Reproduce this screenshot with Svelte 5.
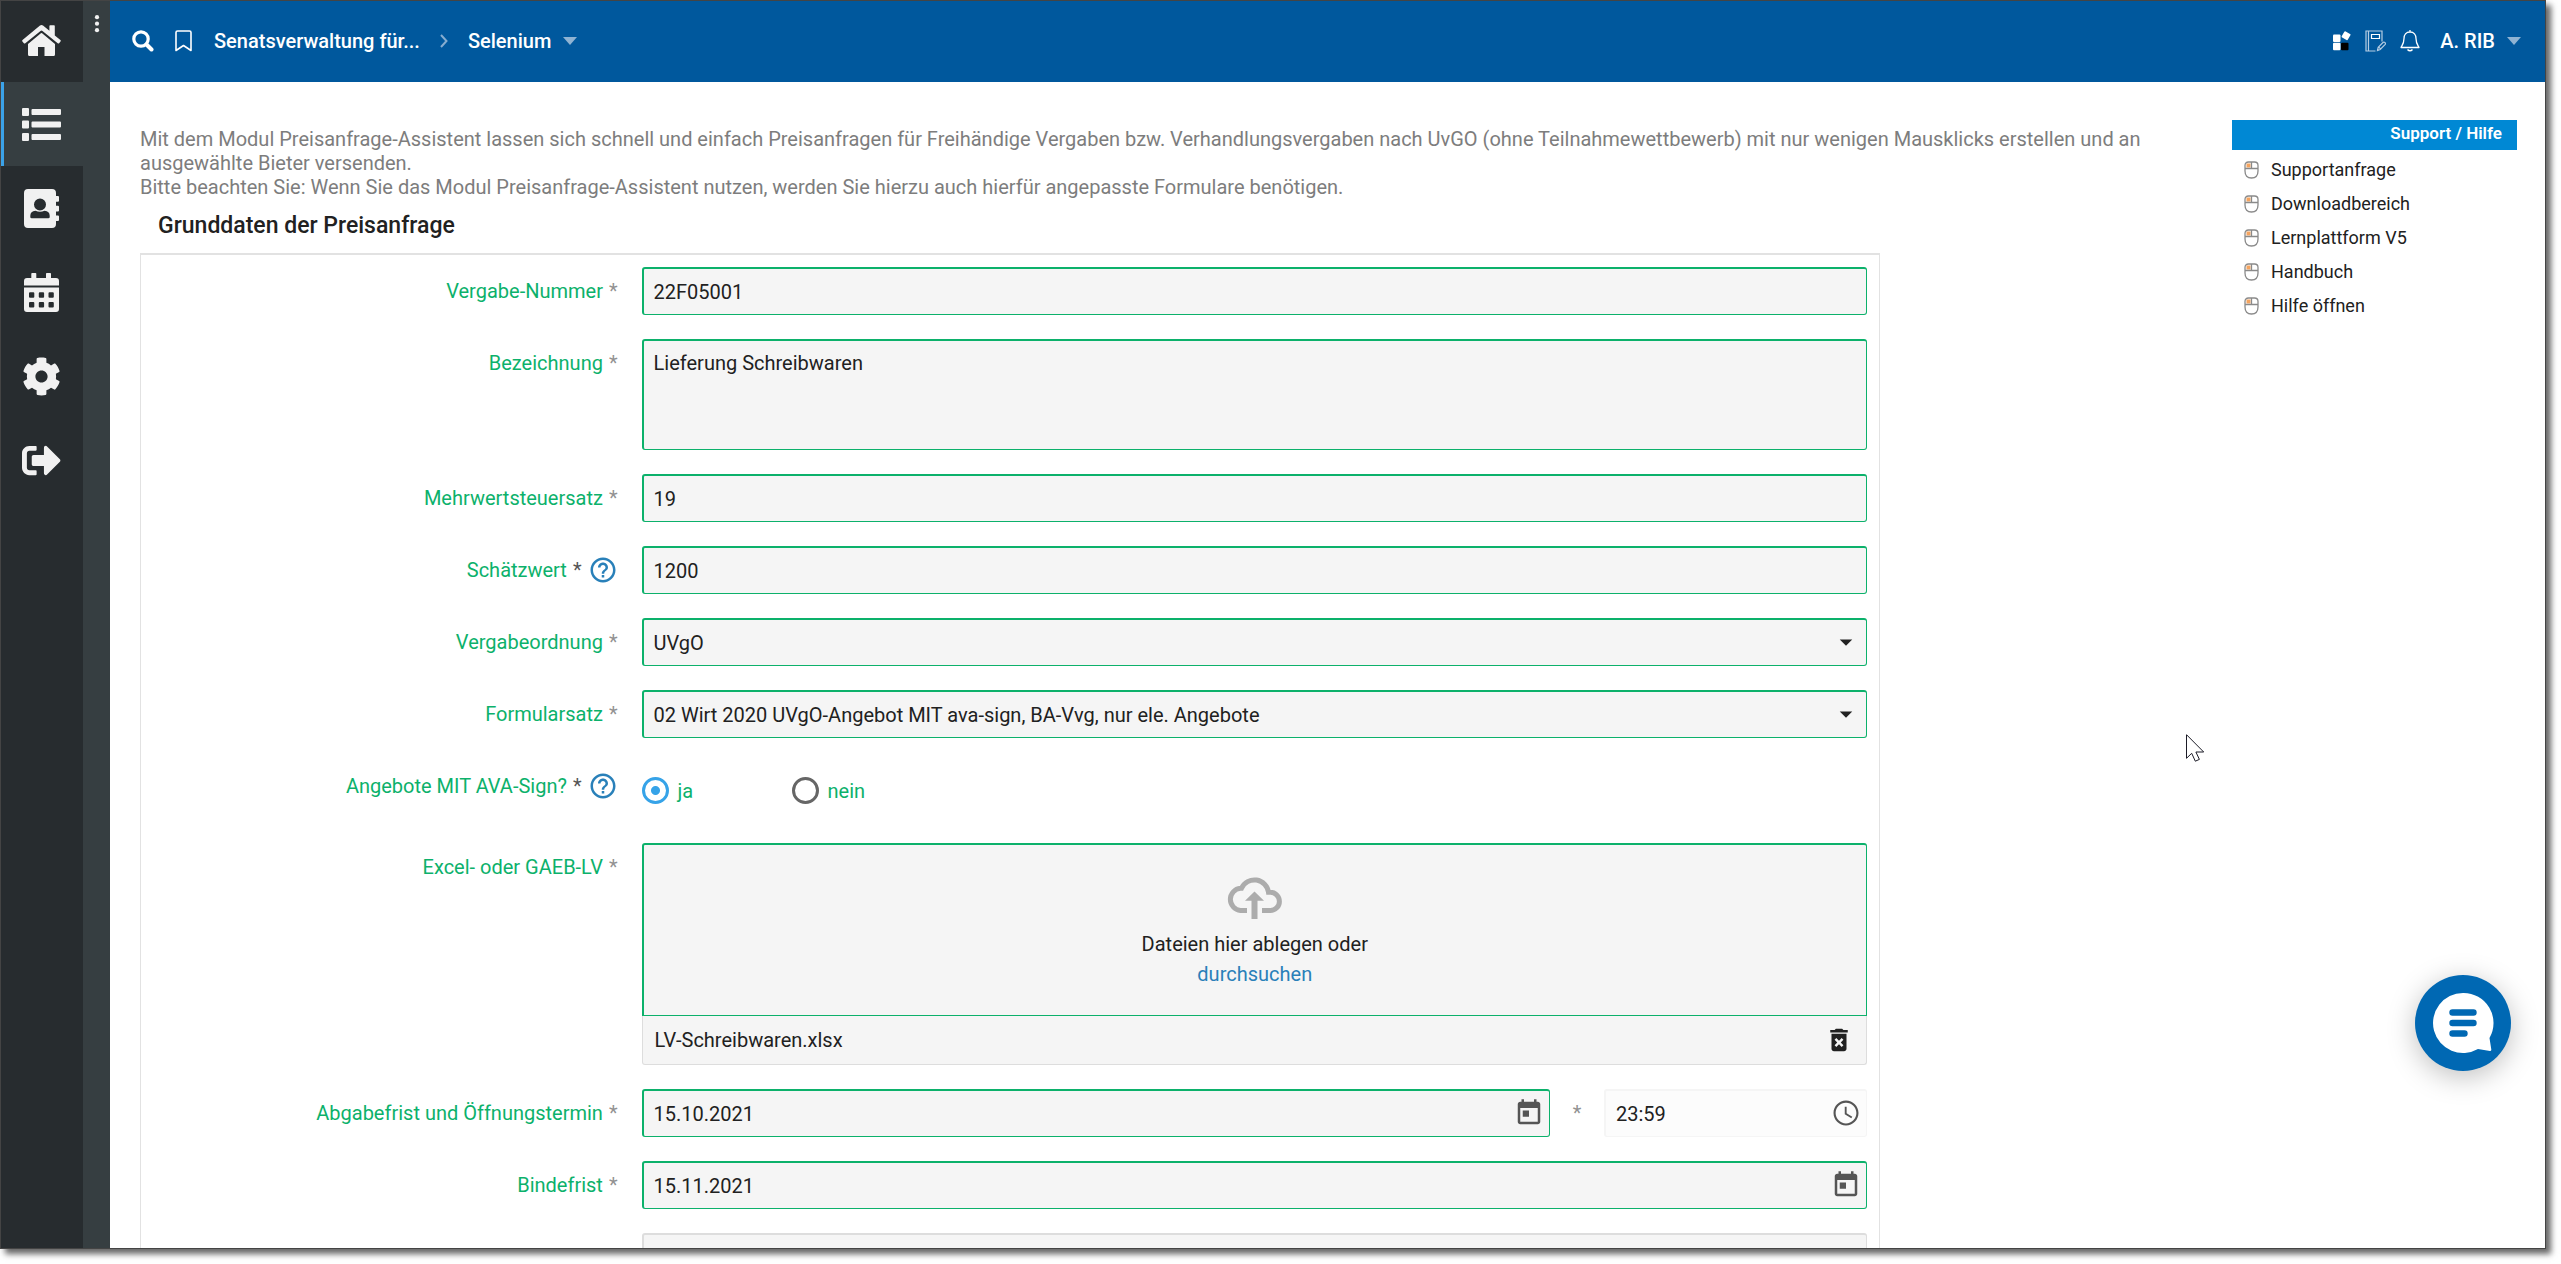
<script lang="ts">
  interface NavItem {
    label: string
    width: number
    height: number
    viewBox: string
    path: string
  }

  const navItems: NavItem[] = [
    {
      label: 'Startseite',
      width: 39,
      height: 31,
      viewBox: '0 0 39 31',
      path: 'M18 .6q1.5-1.2 3 0l6.4 5.2V1q0-.8.8-.8h3.800q.8 0 .8.800v9.400l5.600 4.600q.8.7.1 1.500l-1.400 1.700q-.7.700-1.400.100L20.500 6q-1-.8-2 0L3.300 18.300q-.7.600-1.400-.1L.4 16.500q-.6-.8.1-1.500zM18.900 8.300q.6-.5 1.200 0L33 18.900V29.500q0 1.500-1.500 1.500h-9V22h-6.500v9H7.500Q6 31 6 29.500V18.900z',
    },
    {
      label: 'Vergaben',
      width: 39,
      height: 33,
      viewBox: '0 0 39 33',
      path: 'M1 0h5q1 0 1 1v6q0 1-1 1H1Q0 8 0 7V1q0-1 1-1zM10.500 1H38q1 0 1 1v4q0 1-1 1H10.500q-1 0-1-1V2q0-1 1-1zM1 12.500h5q1 0 1 1v6q0 1-1 1H1q-1 0-1-1v-6q0-1 1-1zM10.500 13.500H38q1 0 1 1v4q0 1-1 1H10.500q-1 0-1-1v-4q0-1 1-1zM1 25h5q1 0 1 1v6q0 1-1 1H1q-1 0-1-1v-6q0-1 1-1zM10.500 26H38q1 0 1 1v4q0 1-1 1H10.500q-1 0-1-1v-4q0-1 1-1z',
    },
    {
      label: 'Adressbuch',
      width: 35,
      height: 39,
      viewBox: '0 0 35 39',
      path: 'M4 0h24q4 0 4 4v3h2q1 0 1 1v3.700q0 1-1 1h-2v4h2q1 0 1 1v3.700q0 1-1 1h-2v4h2q1 0 1 1V31q0 1-1 1h-2v3q0 4-4 4H4q-4 0-4-4V4q0-4 4-4zM16 9.500a6 6 0 1 0 0 12a6 6 0 1 0 0-12zM11.500 21.700q-5.200.6-5.200 5v1.300q0 1.300 1.300 1.300h16.800q1.300 0 1.300-1.300v-1.300q0-4.400-5.200-5q-4.500 2-9 0z',
    },
    {
      label: 'Kalender',
      width: 35,
      height: 39,
      viewBox: '0 0 35 39',
      path: 'M3 5h4.300V.8q0-.8.8-.8h3.400q.8 0 .8.800V5H22V.8q0-.8.8-.8h3.400q.8 0 .8.800V5h5q3 0 3 3v4.500H0V8q0-3 3-3zM0 14.500h35V36q0 3-3 3H3q-3 0-3-3zM6 19.300q-1 0-1 1v3.400q0 1 1 1h3.300q1 0 1-1v-3.400q0-1-1-1zm9.800 0q-1 0-1 1v3.400q0 1 1 1h3.300q1 0 1-1v-3.400q0-1-1-1zm9.700 0q-1 0-1 1v3.400q0 1 1 1h3.300q1 0 1-1v-3.400q0-1-1-1zM6 29q-1 0-1 1v3.400q0 1 1 1h3.300q1 0 1-1V30q0-1-1-1zm9.800 0q-1 0-1 1v3.400q0 1 1 1h3.300q1 0 1-1V30q0-1-1-1zm9.700 0q-1 0-1 1v3.400q0 1 1 1h3.300q1 0 1-1V30q0-1-1-1z',
    },
    {
      label: 'Einstellungen',
      width: 39,
      height: 39,
      viewBox: '0 0 512 512',
      path: 'M487.4 315.7l-42.6-24.6c4.3-23.2 4.3-47 0-70.2l42.6-24.6c4.900-2.800 7.100-8.600 5.500-14-11.100-35.600-30-67.800-54.700-94.600-3.800-4.100-10-5.100-14.800-2.300L380.800 110c-17.900-15.400-38.500-27.300-60.800-35.100V25.800c0-5.600-3.900-10.500-9.400-11.700-36.700-8.200-74.300-7.800-109.200 0-5.500 1.200-9.400 6.100-9.400 11.700V75c-22.200 7.900-42.800 19.800-60.800 35.100L88.700 85.500c-4.900-2.800-11-1.900-14.800 2.300-24.700 26.700-43.600 58.900-54.700 94.600-1.700 5.400.6 11.200 5.500 14L67.300 221c-4.300 23.200-4.300 47 0 70.200l-42.600 24.600c-4.900 2.800-7.100 8.600-5.500 14 11.100 35.600 30 67.800 54.700 94.600 3.800 4.100 10 5.100 14.800 2.300l42.600-24.600c17.900 15.400 38.500 27.300 60.800 35.100v49.200c0 5.600 3.900 10.500 9.400 11.700 36.700 8.200 74.300 7.800 109.200 0 5.500-1.200 9.400-6.100 9.400-11.700v-49.200c22.200-7.900 42.800-19.800 60.800-35.100l42.600 24.600c4.900 2.800 11 1.900 14.800-2.300 24.700-26.700 43.600-58.900 54.700-94.600 1.500-5.500-.7-11.300-5.600-14.100zM256 336c-44.100 0-80-35.900-80-80s35.900-80 80-80 80 35.900 80 80-35.900 80-80 80z',
    },
    {
      label: 'Abmelden',
      width: 39,
      height: 39,
      viewBox: '0 0 512 512',
      path: 'M497 273L329 441c-15 15-41 4.500-41-17v-96H152c-13.300 0-24-10.700-24-24v-96c0-13.300 10.700-24 24-24h136V88c0-21.400 25.900-32 41-17l168 168c9.300 9.400 9.300 24.600 0 34zM192 436v-40c0-6.600-5.400-12-12-12H96c-17.700 0-32-14.300-32-32V160c0-17.700 14.300-32 32-32h84c6.600 0 12-5.400 12-12V76c0-6.600-5.400-12-12-12H96c-53 0-96 43-96 96v192c0 53 43 96 96 96h84c6.600 0 12-5.400 12-12z',
    },
  ]

  const supportLinks = ['Supportanfrage', 'Downloadbereich', 'Lernplattform V5', 'Handbuch', 'Hilfe öffnen']

  let active = $state('Vergaben')
  let nummer = $state('22F05001')
  let bezeichnung = $state('Lieferung Schreibwaren')
  let steuersatz = $state('19')
  let schaetzwert = $state('1200')
  let avaSign = $state('ja')
  let files = $state(['LV-Schreibwaren.xlsx'])
  let abgabefrist = $state('15.10.2021')
  let uhrzeit = $state('23:59')
  let bindefrist = $state('15.11.2021')

  function removeFile(name: string) {
    files = files.filter((f) => f !== name)
  }
</script>

{#snippet caret()}
  <svg class="caret" width="14" height="8" viewBox="0 0 14 8" aria-hidden="true"><path d="M0 0h14L7 8z" /></svg>
{/snippet}

{#snippet dropIcon()}
  <svg class="field-icon dark" viewBox="0 0 24 24" aria-hidden="true"><path d="M7 10l5 5 5-5z" /></svg>
{/snippet}

{#snippet calendarIcon()}
  <svg class="field-icon" viewBox="0 0 24 24" aria-hidden="true">
    <path d="M19 3h-1V1h-2v2H8V1H6v2H5c-1.110 0-1.990.9-1.990 2L3 19c0 1.100.89 2 2 2h14c1.100 0 2-.9 2-2V5c0-1.100-.9-2-2-2zm0 16H5V8h14v11zM7 10h5v5H7z" />
  </svg>
{/snippet}

{#snippet helpButton()}
  <button class="help" type="button" aria-label="Hilfe anzeigen">
    <svg viewBox="0 0 24 24" aria-hidden="true">
      <path d="M11 18h2v-2h-2v2zm1-16C6.480 2 2 6.480 2 12s4.480 10 10 10 10-4.480 10-10S17.520 2 12 2zm0 18c-4.410 0-8-3.590-8-8s3.590-8 8-8 8 3.590 8 8-3.590 8-8 8zm0-14c-2.210 0-4 1.790-4 4h2c0-1.100.9-2 2-2s2 .9 2 2c0 2-3 1.750-3 5h2c0-2.250 3-2.500 3-5 0-2.210-1.790-4-4-4z" />
    </svg>
  </button>
{/snippet}

<div class="window">
  <nav class="sidebar" aria-label="Hauptnavigation">
    {#each navItems as item}
      <button
        class="nav-item"
        class:nav-item--active={active === item.label}
        type="button"
        aria-label={item.label}
        onclick={() => (active = item.label)}
      >
        <svg width={item.width} height={item.height} viewBox={item.viewBox} aria-hidden="true">
          <path fill-rule="evenodd" d={item.path} />
        </svg>
      </button>
    {/each}
  </nav>

  <div class="strip">
    <button class="more" type="button" aria-label="Menü ausklappen">
      <svg width="6" height="18" viewBox="0 0 6 18" aria-hidden="true">
        <circle cx="3" cy="2.200" r="2.100" /><circle cx="3" cy="8.700" r="2.100" /><circle cx="3" cy="15.200" r="2.100" />
      </svg>
    </button>
  </div>

  <div class="page">
    <header class="topbar">
      <button class="icon-btn" type="button" aria-label="Suche">
        <svg width="22" height="22" viewBox="0 0 22 22" fill="none" stroke="#fff" aria-hidden="true">
          <circle cx="9" cy="9" r="7.200" stroke-width="3.200" />
          <path d="M14.500 14.500l5 5" stroke-width="4" stroke-linecap="round" />
        </svg>
      </button>
      <button class="icon-btn bookmark" type="button" aria-label="Merken">
        <svg width="17" height="22" viewBox="0 0 17 22" fill="none" stroke="#fff" stroke-width="1.600" stroke-linejoin="round" aria-hidden="true">
          <path d="M1 2.500Q1 1 2.500 1h12Q16 1 16 2.500V20.500l-7.500-5-7.500 5z" />
        </svg>
      </button>
      <a class="crumb" href="#senat">Senatsverwaltung für...</a>
      <svg class="chevron" width="8" height="14" viewBox="0 0 8 14" fill="none" aria-hidden="true"><path d="M1 1l5.500 6L1 13" /></svg>
      <button class="crumb" type="button">Selenium {@render caret()}</button>

      <div class="tools">
        <button class="icon-btn" type="button" aria-label="Anwendungen">
          <svg width="18" height="20" viewBox="0 0 18 20" fill="#fff" aria-hidden="true">
            <rect x="0" y="3.500" width="7.500" height="7.500" rx="1" />
            <rect x="0" y="11.800" width="7.500" height="7.500" rx="1" />
            <rect x="8" y="11.800" width="7.500" height="7.500" rx="1" fill="#000" />
            <rect x="9.600" y="1.200" width="7" height="7" rx="1" transform="rotate(30 13.100 4.700)" />
          </svg>
        </button>
        <button class="icon-btn" type="button" aria-label="Notizen">
          <svg width="21" height="22" viewBox="0 0 21 22" fill="none" stroke="#b5cde3" stroke-width="1.200" aria-hidden="true">
            <path d="M17 11.500V1H1v20h9.500M3.500 1v20" />
            <path d="M6.500 4.500h8v4h-8z" stroke="#fff" />
            <path d="M12.500 20.500l.7-3.200 5-5q.8-.6 1.500.1l.5.500q.6.700 0 1.400l-5 5.200zM13.800 17.200l2 2" />
          </svg>
        </button>
        <button class="icon-btn" type="button" aria-label="Benachrichtigungen">
          <svg width="20" height="22" viewBox="0 0 20 22" fill="none" stroke="#fff" stroke-width="1.300" stroke-linejoin="round" aria-hidden="true">
            <path d="M10 2c-4 0-6 3-6 6.500 0 5-1.500 6.500-3 9h18c-1.500-2.500-3-4-3-9C16 5 14 2 10 2zM10 2V0" />
            <path d="M7.500 19.500q2.500 2.500 5 0" stroke-width="1.600" />
          </svg>
        </button>
        <button class="crumb user" type="button">A. RIB {@render caret()}</button>
      </div>
    </header>

    <div class="content">
      <main class="main">
        <p class="intro">
          Mit dem Modul Preisanfrage-Assistent lassen sich schnell und einfach Preisanfragen für Freihändige Vergaben
          bzw. Verhandlungsvergaben nach UvGO (ohne Teilnahmewettbewerb) mit nur wenigen Mausklicks erstellen und an
          ausgewählte Bieter versenden.<br />
          Bitte beachten Sie: Wenn Sie das Modul Preisanfrage-Assistent nutzen, werden Sie hierzu auch hierfür
          angepasste Formulare benötigen.
        </p>
        <h1>Grunddaten der Preisanfrage</h1>

        <form class="form" onsubmit={(e) => e.preventDefault()}>
          <div class="label"><label for="nummer">Vergabe-Nummer</label><span class="star">*</span></div>
          <input class="control" id="nummer" type="text" bind:value={nummer} />

          <div class="label"><label for="bezeichnung">Bezeichnung</label><span class="star">*</span></div>
          <textarea class="control area" id="bezeichnung" bind:value={bezeichnung}></textarea>

          <div class="label"><label for="steuersatz">Mehrwertsteuersatz</label><span class="star">*</span></div>
          <input class="control" id="steuersatz" type="text" bind:value={steuersatz} />

          <div class="label">
            <label for="schaetzwert">Schätzwert</label><span class="star star--dark">*</span>
            {@render helpButton()}
          </div>
          <input class="control" id="schaetzwert" type="text" bind:value={schaetzwert} />

          <div class="label"><label for="ordnung">Vergabeordnung</label><span class="star">*</span></div>
          <div class="field">
            <select class="control" id="ordnung">
              <option>UVgO</option>
            </select>
            {@render dropIcon()}
          </div>

          <div class="label"><label for="formularsatz">Formularsatz</label><span class="star">*</span></div>
          <div class="field">
            <select class="control" id="formularsatz">
              <option>02 Wirt 2020 UVgO-Angebot MIT ava-sign, BA-Vvg, nur ele. Angebote</option>
            </select>
            {@render dropIcon()}
          </div>

          <div class="label">
            <span id="ava-label">Angebote MIT AVA-Sign?</span><span class="star star--dark">*</span>
            {@render helpButton()}
          </div>
          <div class="radios" role="radiogroup" aria-labelledby="ava-label">
            {#each ['ja', 'nein'] as option}
              <label class="radio">
                <input type="radio" name="ava-sign" value={option} bind:group={avaSign} />
                {option}
              </label>
            {/each}
          </div>

          <div class="label"><span>Excel- oder GAEB-LV</span><span class="star">*</span></div>
          <div class="upload">
            <div class="dropzone">
              <svg width="55" height="43" viewBox="0 0 55 43" aria-hidden="true">
                <path
                  d="M20 34.500H13.500A11.200 11.200 0 0 1 13.500 12.200H14.500A14.200 14.200 0 0 1 41.500 16.300H43.300A9.100 9.100 0 0 1 43.300 34.500H35"
                  fill="none"
                  stroke="#acacac"
                  stroke-width="5"
                />
                <path d="M27.500 15.500l9.500 9.300h-6.500V43h-6V24.800H18z" fill="#acacac" />
              </svg>
              <span class="drop-text">Dateien hier ablegen oder</span>
              <a class="browse" href="#durchsuchen">durchsuchen</a>
            </div>
            {#each files as file}
              <div class="file">
                <span>{file}</span>
                <button class="delete" type="button" aria-label="Datei entfernen" onclick={() => removeFile(file)}>
                  <svg viewBox="0 0 24 24" aria-hidden="true">
                    <path d="M6 19c0 1.100.9 2 2 2h8c1.100 0 2-.9 2-2V7H6v12zm2.460-7.120l1.410-1.410L12 12.590l2.120-2.120 1.410 1.410L13.410 14l2.120 2.120-1.410 1.410L12 15.410l-2.120 2.120-1.410-1.410L10.590 14l-2.130-2.120zM15.500 4l-1-1h-5l-1 1H5v2h14V4z" />
                  </svg>
                </button>
              </div>
            {/each}
          </div>

          <div class="label"><label for="abgabefrist">Abgabefrist und Öffnungstermin</label><span class="star">*</span></div>
          <div class="date-time">
            <div class="field">
              <input class="control" id="abgabefrist" type="text" bind:value={abgabefrist} />
              {@render calendarIcon()}
            </div>
            <span class="star">*</span>
            <div class="field">
              <input class="control control--faint" type="text" aria-label="Uhrzeit" bind:value={uhrzeit} />
              <svg class="field-icon" viewBox="0 0 24 24" aria-hidden="true">
                <path d="M11.990 2C6.470 2 2 6.480 2 12s4.470 10 9.990 10C17.520 22 22 17.520 22 12S17.520 2 11.990 2zM12 20.300c-4.600 0-8.300-3.700-8.300-8.300s3.700-8.300 8.300-8.300 8.300 3.700 8.300 8.300-3.700 8.300-8.300 8.300zM12.500 7H11v6l5.250 3.150.75-1.230-4.500-2.670z" />
              </svg>
            </div>
          </div>

          <div class="label"><label for="bindefrist">Bindefrist</label><span class="star">*</span></div>
          <div class="field">
            <input class="control" id="bindefrist" type="text" bind:value={bindefrist} />
            {@render calendarIcon()}
          </div>

          <div class="label"></div>
          <input class="control control--plain" type="text" aria-label="Bemerkung" />
        </form>
      </main>

      <aside class="support">
        <h2>Support / Hilfe</h2>
        <ul>
          {#each supportLinks as link}
            <li>
              <a href="#support">
                <svg width="15" height="18" viewBox="0 0 15 18" aria-hidden="true">
                  <path d="M2.500 2.500h4v4h-4z" fill="#f5a45f" />
                  <path d="M1 4.500Q1 1 4.500 1h6Q14 1 14 4.500V10q0 7-6.500 7T1 10zM1 7.500h13M7.500 1v6.500" fill="none" stroke="#8a8a8a" stroke-width="1.300" />
                </svg>
                {link}
              </a>
            </li>
          {/each}
        </ul>
      </aside>
    </div>
  </div>

  <svg class="pointer" width="19" height="28" viewBox="0 0 19 28" aria-hidden="true">
    <path d="M.5.700V24.300L5.700 19.300l3.600 7.900 4.100-1.800L9.900 18h7.800z" fill="#fff" stroke="#1b1b26" />
  </svg>

  <button class="chat" type="button" aria-label="Chat öffnen">
    <svg width="96" height="96" viewBox="0 0 96 96" aria-hidden="true">
      <path d="M48 18a30 30 0 1 0 15 56l12 2q1.500 0 1.300-1.500L74.500 63A30 30 0 0 0 48 18z" fill="#fff" />
      <path d="M37.500 37.500h21M37.500 48h21M37.500 58.500h12" stroke="#0068b3" stroke-width="6.400" stroke-linecap="round" />
    </svg>
  </button>
</div>

<style>
  :global(body) {
    min-height: 100vh;
    margin: 0;
    background: #fff;
  }

  .window {
    position: relative;
    display: flex;
    box-sizing: border-box;
    height: calc(100vh - 15px);
    margin-right: 15px;
    border: 1px solid #444;
    background: #fff;
    box-shadow: 5px 5px 6px rgba(0, 0, 0, 0.6);
    overflow: hidden;
    font-family: Roboto, 'Liberation Sans', sans-serif;
    font-size: 20px;
    line-height: 24px;
    color: #212121;
  }

  button {
    padding: 0;
    border: 0;
    background: none;
    color: inherit;
    font: inherit;
    cursor: pointer;
  }

  a {
    color: inherit;
    text-decoration: none;
  }

  svg {
    display: block;
    flex: none;
  }

  /* navigation */
  .sidebar {
    display: flex;
    flex-direction: column;
    flex: none;
    width: 82px;
    background: #272c2f;
  }

  .nav-item {
    display: flex;
    align-items: center;
    justify-content: center;
    box-sizing: border-box;
    height: 84px;
    padding-right: 2px;
    fill: #f1f1f1;
  }

  .nav-item:first-child {
    height: 81px;
    padding-bottom: 2px;
  }

  .nav-item--active {
    padding-right: 5px;
    border-left: 3px solid #3ba2e8;
    background: #363e41;
  }

  .strip {
    display: flex;
    flex: none;
    justify-content: center;
    align-items: flex-start;
    width: 27px;
    background: #363e41;
  }

  .more {
    margin-top: 14px;
    fill: #f1f1f1;
  }

  .page {
    display: flex;
    flex-direction: column;
    flex: 1;
    min-width: 0;
  }

  /* top bar */
  .topbar {
    display: flex;
    align-items: center;
    flex: none;
    box-sizing: border-box;
    height: 81px;
    padding: 0 24px 2px 22px;
    background: #00589d;
    color: #fff;
    font-weight: 500;
  }

  .bookmark {
    margin: 0 22px 0 21px;
  }

  .crumb {
    display: flex;
    align-items: center;
    gap: 12px;
    font-weight: 500;
    white-space: nowrap;
  }

  .chevron {
    margin: 0 20px;
    stroke: #86add0;
    stroke-width: 2;
  }

  .caret {
    fill: #8fb3d3;
  }

  .tools {
    display: flex;
    align-items: center;
    gap: 14px;
    margin-left: auto;
  }

  .user {
    margin-left: 6px;
  }

  /* content */
  .content {
    display: flex;
    align-items: flex-start;
    gap: 60px;
    flex: 1;
    min-height: 0;
    padding: 38px 28px 0 30px;
    overflow: hidden;
  }

  .main {
    flex: 1;
    min-width: 0;
    padding-top: 7px;
  }

  .intro {
    margin: 0;
    color: #7d7d7d;
  }

  h1 {
    margin: 0;
    padding-left: 18px;
    font-size: 23px;
    font-weight: 500;
    line-height: 54px;
  }

  .form {
    display: grid;
    grid-template-columns: 28fr 72fr;
    gap: 24px;
    box-sizing: border-box;
    max-width: 1740px;
    padding: 12px 12px 24px 0;
    border: 1px solid #e2e2e2;
    border-top-width: 2px;
  }

  .label {
    display: flex;
    align-items: center;
    justify-content: flex-end;
    height: 48px;
    color: #0cb16b;
  }

  .star {
    margin-left: 6px;
    color: #929292;
  }

  .star--dark {
    color: #555;
  }

  .help {
    margin-left: 6px;
  }

  .help svg {
    width: 30px;
    height: 30px;
    fill: #2980b9;
  }

  .control {
    display: block;
    box-sizing: border-box;
    width: 100%;
    height: 48px;
    margin: 0;
    padding: 0 10px;
    border: solid #0cb16b;
    border-width: 2px 1px 1px 2px;
    border-radius: 3px;
    outline: none;
    background: #f5f5f5;
    color: #212121;
    font: inherit;
    appearance: none;
  }

  .area {
    height: 111px;
    padding: 10px;
    resize: none;
  }

  .control--faint {
    border-color: #f5f5f5;
    background: #fcfcfc;
  }

  .control--plain {
    border-color: #ddd;
  }

  .field {
    position: relative;
  }

  .field-icon {
    position: absolute;
    top: 9px;
    right: 6px;
    width: 30px;
    height: 30px;
    fill: #555;
    pointer-events: none;
  }

  .field-icon.dark {
    fill: #212121;
  }

  .radios {
    display: flex;
    padding: 15px 0;
  }

  .radio {
    display: flex;
    align-items: center;
    gap: 9px;
    min-width: 150px;
    height: 27px;
    color: #0cb16b;
  }

  .radio input {
    box-sizing: border-box;
    width: 27px;
    height: 27px;
    margin: 0;
    border: 3px solid #666;
    border-radius: 50%;
    background: #fff;
    appearance: none;
  }

  .radio input:checked {
    border-color: #36a3e8;
    background: radial-gradient(circle, #36a3e8 4px, #fff 5px);
  }

  .dropzone {
    display: flex;
    flex-direction: column;
    align-items: center;
    padding: 31px 0 26px;
    border: solid #0cb16b;
    border-width: 2px 1px 1px 2px;
    border-radius: 3px 3px 0 0;
    background: #f5f5f5;
    line-height: 30px;
  }

  .drop-text {
    margin-top: 10px;
  }

  .browse {
    color: #2980b9;
  }

  .file {
    display: flex;
    align-items: center;
    justify-content: space-between;
    height: 48px;
    padding: 0 12px;
    border: 1px solid #ddd;
    border-top: 0;
    border-radius: 0 0 3px 3px;
    background: #f5f5f5;
  }

  .delete svg {
    width: 30px;
    height: 30px;
    fill: #212121;
  }

  .date-time {
    display: grid;
    grid-template-columns: 1fr 54px 263px;
    align-items: center;
  }

  .date-time > .star {
    margin: 0;
    text-align: center;
  }

  /* support box */
  .support {
    flex: none;
    width: 285px;
    font-size: 18px;
  }

  h2 {
    margin: 0;
    padding: 0 15px 4px;
    background: #0088d4;
    color: #fff;
    font-size: 17px;
    font-weight: 600;
    line-height: 26px;
    text-align: right;
  }

  ul {
    margin: 0;
    padding: 3px 0 0;
    list-style: none;
  }

  li a {
    display: flex;
    align-items: center;
    gap: 12px;
    padding-left: 12px;
    line-height: 34px;
  }

  /* floating elements */
  .pointer {
    position: absolute;
    top: 733px;
    right: 340px;
  }

  .chat {
    position: absolute;
    right: 34px;
    bottom: 177px;
    border-radius: 50%;
    background: #0068b3;
    box-shadow: 0 6px 28px rgba(0, 0, 0, 0.25);
  }
</style>
